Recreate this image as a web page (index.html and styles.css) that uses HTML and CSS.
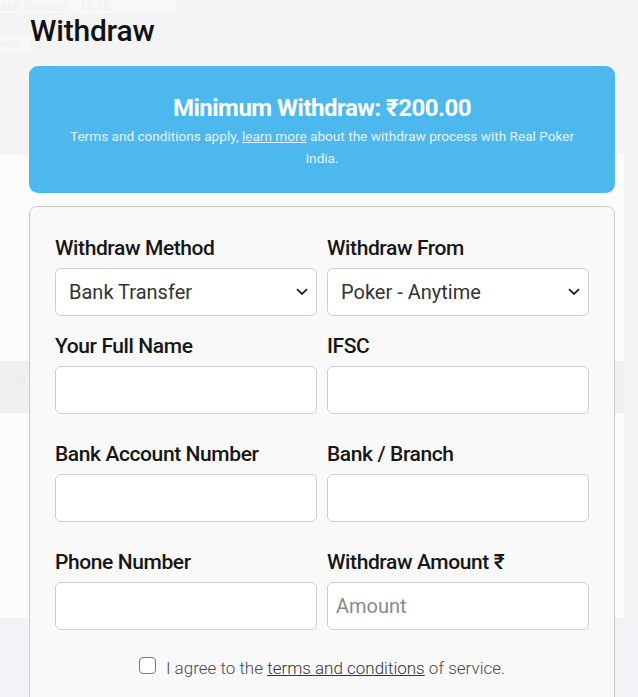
FILE: index.html
```html
<!DOCTYPE html>
<html lang="en">
<head>
<meta charset="utf-8">
<title>Withdraw</title>
<link rel="stylesheet" href="styles.css">
</head>
<body>
<div class="page">
  <div class="bg-strip bg-strip-top"><span>ash Booster - 10 NL</span></div>
  <div class="bg-gap"></div>
  <div class="bg-strip bg-strip-sub"><span>ours</span></div>
  <div class="bg-space"></div>
  <div class="bg-panel"></div>
  <div class="bg-band"><span>SMALL</span></div>
  <div class="bg-panel bg-panel-2"></div>
  <div class="bg-foot"></div>
</div>

<div class="modal">
  <h1 class="title">Withdraw</h1>
  <div class="notice">
    <h2 class="notice-title">Minimum Withdraw: ₹200.00</h2>
    <p class="notice-text">Terms and conditions apply, <a href="#">learn more</a> about the withdraw process with Real Poker India.</p>
  </div>
  <form class="card">
    <div class="grid">
      <div class="field field-select">
        <label class="label">Withdraw Method</label>
        <select class="control select"><option>Bank Transfer</option></select>
      </div>
      <div class="field field-select">
        <label class="label">Withdraw From</label>
        <select class="control select"><option>Poker - Anytime</option></select>
      </div>
      <div class="field">
        <label class="label">Your Full Name</label>
        <input class="control" type="text">
      </div>
      <div class="field">
        <label class="label">IFSC</label>
        <input class="control" type="text">
      </div>
      <div class="field">
        <label class="label">Bank Account Number</label>
        <input class="control" type="text">
      </div>
      <div class="field">
        <label class="label">Bank / Branch</label>
        <input class="control" type="text">
      </div>
      <div class="field">
        <label class="label">Phone Number</label>
        <input class="control" type="text">
      </div>
      <div class="field">
        <label class="label">Withdraw Amount ₹</label>
        <input class="control" type="text" placeholder="Amount">
      </div>
    </div>
    <label class="agree"><span class="box"></span><span>I agree to the <a href="#">terms and conditions</a> of service.</span></label>
  </form>
</div>
</body>
</html>
```
FILE: styles.css
```css
* { box-sizing: border-box; }
html, body { margin: 0; padding: 0; }
body {
  width: 638px;
  height: 697px;
  overflow: hidden;
  background: #f4f4f4;
  font-family: Roboto, "Noto Sans", sans-serif;
  position: relative;
}

/* faded page behind the modal */
.page { display: flex; flex-direction: column; }
.bg-strip {
  width: 177px;
  height: 13px;
  background: #f8f8f8;
  overflow: hidden;
  color: #f0f0f0;
  font-size: 13px;
  line-height: 13px;
  white-space: nowrap;
}
.bg-strip-sub { height: 16px; width: 30px; font-size: 10px; line-height: 16px; margin-top: 0; }
.bg-gap { height: 23px; }
.bg-space { height: 103px; }
.bg-panel { height: 206px; width: 624px; background: #fcfcfc; }
.bg-band {
  height: 52px; width: 624px; background: #f0f0f0;
  color: #ececec; font-size: 11px; padding-top: 14px;
}
.bg-panel-2 { height: 205px; }
.bg-foot { height: 90px; background: #f3f2f6; }

/* modal */
.modal {
  position: absolute;
  top: 0;
  left: 29px;
  width: 586px;
}
.title {
  margin: 16px 0 0 1px;
  font-size: 30px;
  line-height: 30px;
  font-weight: 500;
  color: #111;
  letter-spacing: -0.2px;
}
.notice {
  margin-top: 20px;
  background: #4cb8ee;
  border-radius: 9px;
  padding: 27px 38px 24px;
  text-align: center;
  color: #fff;
}
.notice-title {
  margin: 0;
  font-size: 24px;
  line-height: 30px;
  font-weight: 700;
  letter-spacing: -0.5px;
}
.notice-text {
  margin: 2px 0 0;
  font-size: 13.6px;
  line-height: 22px;
  color: #e4f3fc;
}
.notice-text a { color: inherit; text-decoration: underline; }

.card {
  margin-top: 13px;
  background: #f9f9f9;
  border: 1px solid #c9c9c9;
  border-radius: 8px;
  padding: 28px 25px 40px;
  height: 520px;
}
.grid {
  display: grid;
  grid-template-columns: 262px 262px;
  column-gap: 10px;
}
.field { display: flex; flex-direction: column; margin-bottom: 27px; }
.field-select { margin-bottom: 17px; }
.label {
  font-size: 21px;
  line-height: 26px;
  font-weight: 500;
  color: #161616;
  letter-spacing: -0.4px;
  margin-bottom: 7px;
}
.control {
  height: 48px;
  border: 1px solid #cfcfcf;
  border-radius: 6px;
  background-color: #fff;
  font-family: inherit;
  font-size: 20px;
  color: #333;
  padding: 0 13px;
  margin: 0;
  outline: none;
}
.control::placeholder { color: #8a8a8a; }
.control[placeholder] { padding-left: 8px; }
.select {
  -webkit-appearance: none;
  appearance: none;
  background-image: url("data:image/svg+xml;utf8,<svg xmlns='http://www.w3.org/2000/svg' width='12' height='8' viewBox='0 0 12 8'><path d='M1 1.2 L6 6 L11 1.2' fill='none' stroke='%23222' stroke-width='1.8'/></svg>");
  background-repeat: no-repeat;
  background-position: right 8px center;
  background-size: 12px 8px;
}

.agree {
  margin-top: 0;
  display: flex;
  align-items: center;
  justify-content: center;
  gap: 10px;
  font-size: 17px;
  line-height: 22px;
  color: #4a4a4a;
  font-weight: 300;
}
.agree a { color: #333; text-decoration: underline; }
.box {
  width: 17px;
  height: 17px;
  border: 1.5px solid #777;
  border-radius: 4px;
  background: #fff;
  margin-top: -6px;
}
```
